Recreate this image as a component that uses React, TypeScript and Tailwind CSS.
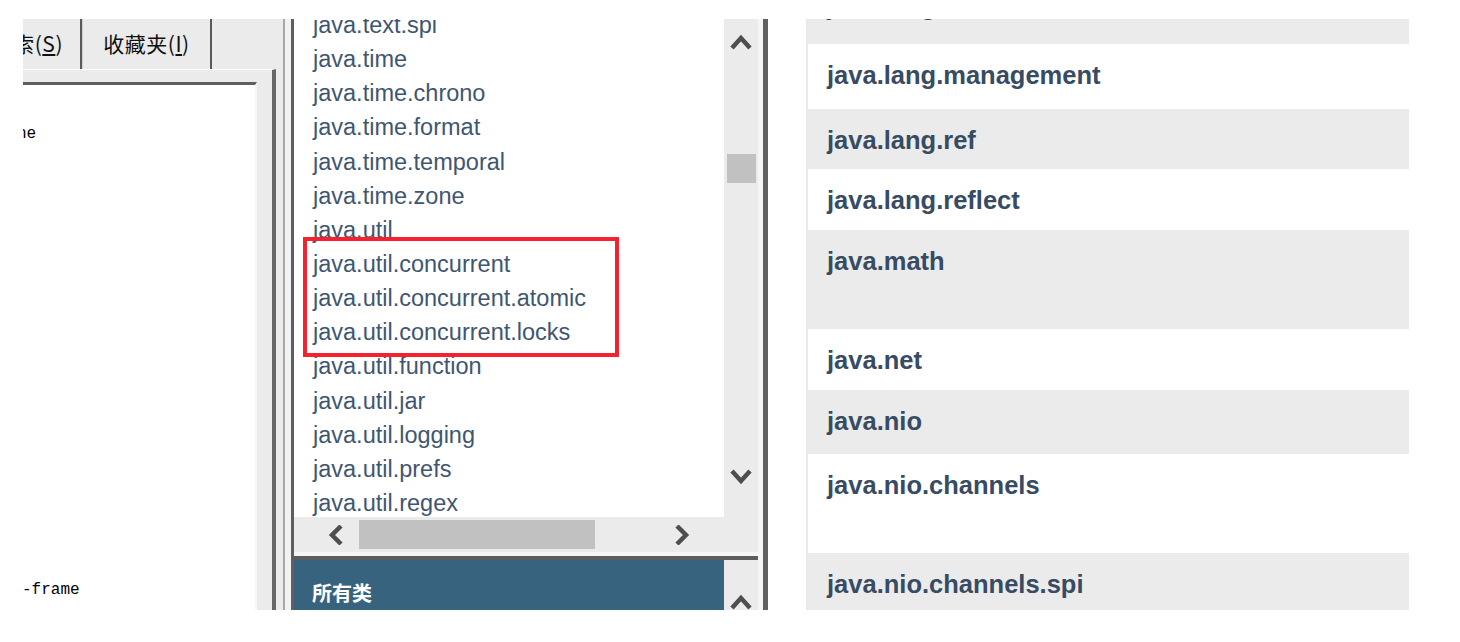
import React from "react";

const cjk = "font-['Noto_Sans_CJK_SC',sans-serif]";

function Chevron({ dir }: { dir: "up" | "down" | "left" | "right" }) {
  const vertical = dir === "up" || dir === "down";
  const pts = {
    up: "2,15 11,5 20,15",
    down: "2,3 11,13 20,3",
    left: "14,1 5,10 14,19",
    right: "4,1 13,10 4,19",
  }[dir];
  return (
    <svg
      width={vertical ? 22 : 18}
      height={vertical ? 17 : 20}
      viewBox={vertical ? "0 0 22 17" : "0 0 18 20"}
      className="block shrink-0"
    >
      <polyline points={pts} fill="none" stroke="#4e4e4e" strokeWidth="4.5" />
    </svg>
  );
}

const packages = [
  "java.text.spi",
  "java.time",
  "java.time.chrono",
  "java.time.format",
  "java.time.temporal",
  "java.time.zone",
  "java.util",
  "java.util.concurrent",
  "java.util.concurrent.atomic",
  "java.util.concurrent.locks",
  "java.util.function",
  "java.util.jar",
  "java.util.logging",
  "java.util.prefs",
  "java.util.regex",
  "java.util.spi",
];

// first row is only showing the bottom of its descenders
const summary = [
  { name: "java.lang.invoke", h: "h-[67px] -mt-[42px]", pt: "pt-[14px]", alt: true },
  { name: "java.lang.management", h: "h-[65px]", pt: "pt-[16px]", alt: false },
  { name: "java.lang.ref", h: "h-[60px]", pt: "pt-[16px]", alt: true },
  { name: "java.lang.reflect", h: "h-[61px]", pt: "pt-[16px]", alt: false },
  { name: "java.math", h: "h-[99px]", pt: "pt-[16px]", alt: true },
  { name: "java.net", h: "h-[61px]", pt: "pt-[16px]", alt: false },
  { name: "java.nio", h: "h-[64px]", pt: "pt-[16px]", alt: true },
  { name: "java.nio.channels", h: "h-[99px]", pt: "pt-[16px]", alt: false },
  { name: "java.nio.channels.spi", h: "h-[80px]", pt: "pt-[16px]", alt: true },
];

function LeftPanel() {
  return (
    <div className="w-[260px] shrink-0 flex flex-col bg-[#ebebeb]">
      <div className={`h-[50px] flex text-[21px] tracking-[0.5px] text-[#111] ${cjk}`}>
        <div className="w-[57px] overflow-hidden flex justify-end items-center pr-[17px]">
          <span className="whitespace-nowrap">
            搜索(<u>S</u>)
          </span>
        </div>
        <div className="w-[2px] bg-[#5a5a5a]" />
        <div className="w-[1px] bg-[#cfcfcf]" />
        <div className="w-[127px] flex items-center justify-center">
          <span className="whitespace-nowrap">
            收藏夹(<u>I</u>)
          </span>
        </div>
        <div className="w-[2px] bg-[#5a5a5a]" />
        <div className="flex-1" />
      </div>
      <div className="flex-1 flex">
        <div className="w-[253px] flex flex-col border-t border-t-white border-r-4 border-r-[#666666] pt-[12px] pr-[15px]">
          <div className="flex-1 flex flex-col bg-white border-t-[3px] border-t-[#5f5f5f] border-r-2 border-r-[#f7f7f7] overflow-hidden font-['Liberation_Mono',monospace] text-[16px] leading-[20px] text-black">
            <div className="pt-[39px] -ml-[6px] whitespace-nowrap">ne</div>
            <div className="mt-[436px] -ml-[1px] whitespace-nowrap">-frame</div>
          </div>
        </div>
      </div>
    </div>
  );
}

function MiddlePanel() {
  return (
    <div className="w-[477px] shrink-0 flex">
      <div className="w-[3px] bg-[#5f5f5f]" />
      <div className="w-[464px] flex flex-col">
        <div className="h-[498px] flex">
          <div className="relative w-[430px] bg-white overflow-hidden font-['Liberation_Sans',Arial,sans-serif] text-[23.5px] text-[#405670]">
            <div className="-mt-[11px]">
              {packages.map((p) => (
                <div key={p} className="h-[34.15px] leading-[34.15px] pl-[19px] whitespace-nowrap">
                  {p}
                </div>
              ))}
            </div>
            <div className="absolute left-[9px] top-[218px] w-[316px] h-[120px] border-4 border-[#f5212f]" />
          </div>
          <div className="w-[34px] bg-[#ebebeb] flex flex-col items-center pt-[14px]">
            <Chevron dir="up" />
            <div className="mt-[104px] w-[29px] h-[29px] bg-[#c1c1c1]" />
            <div className="mt-[285px]">
              <Chevron dir="down" />
            </div>
          </div>
        </div>
        <div className="h-[35px] bg-[#ebebeb] flex items-center pl-[33px]">
          <Chevron dir="left" />
          <div className="ml-[14px] w-[236px] h-[29px] bg-[#c1c1c1]" />
          <div className="ml-[78px]">
            <Chevron dir="right" />
          </div>
        </div>
        <div className="h-[4px] bg-[#f5f5f5]" />
        <div className="h-[4px] bg-[#5c5c5c]" />
        <div className="flex-1 flex">
          <div className={`w-[430px] bg-[#38637f] pl-[18px] pt-[22px] leading-[22px] text-[20px] font-bold text-white ${cjk}`}>
            所有类
          </div>
          <div className="w-[34px] bg-[#ebebeb] flex flex-col items-center pt-[33px]">
            <Chevron dir="up" />
          </div>
        </div>
      </div>
      <div className="w-[5px] bg-[#f5f5f5]" />
      <div className="w-[5px] bg-[#606060]" />
    </div>
  );
}

function RightPanel() {
  return (
    <div className="w-[603px] shrink-0 border-l-2 border-l-[#e9e9e9] overflow-hidden font-['Liberation_Sans',Arial,sans-serif] text-[25.5px] font-bold text-[#374b63]">
      {summary.map((r) => (
        <div
          key={r.name}
          className={`${r.h} ${r.pt} ${r.alt ? "bg-[#ebebeb]" : "bg-white"} pl-[19px] leading-[30px] whitespace-nowrap`}
        >
          {r.name}
        </div>
      ))}
    </div>
  );
}

export default function App() {
  return (
    <div className="w-[1460px] h-[642px] bg-white overflow-hidden">
      <div className="mt-[19px] ml-[23px] h-[591px] flex overflow-hidden">
        <LeftPanel />
        <div className="w-[2px] bg-[#a8a8a8]" />
        <div className="w-[6px] bg-[#f2f2f2]" />
        <MiddlePanel />
        <div className="w-[38px] shrink-0 bg-white" />
        <RightPanel />
      </div>
    </div>
  );
}
